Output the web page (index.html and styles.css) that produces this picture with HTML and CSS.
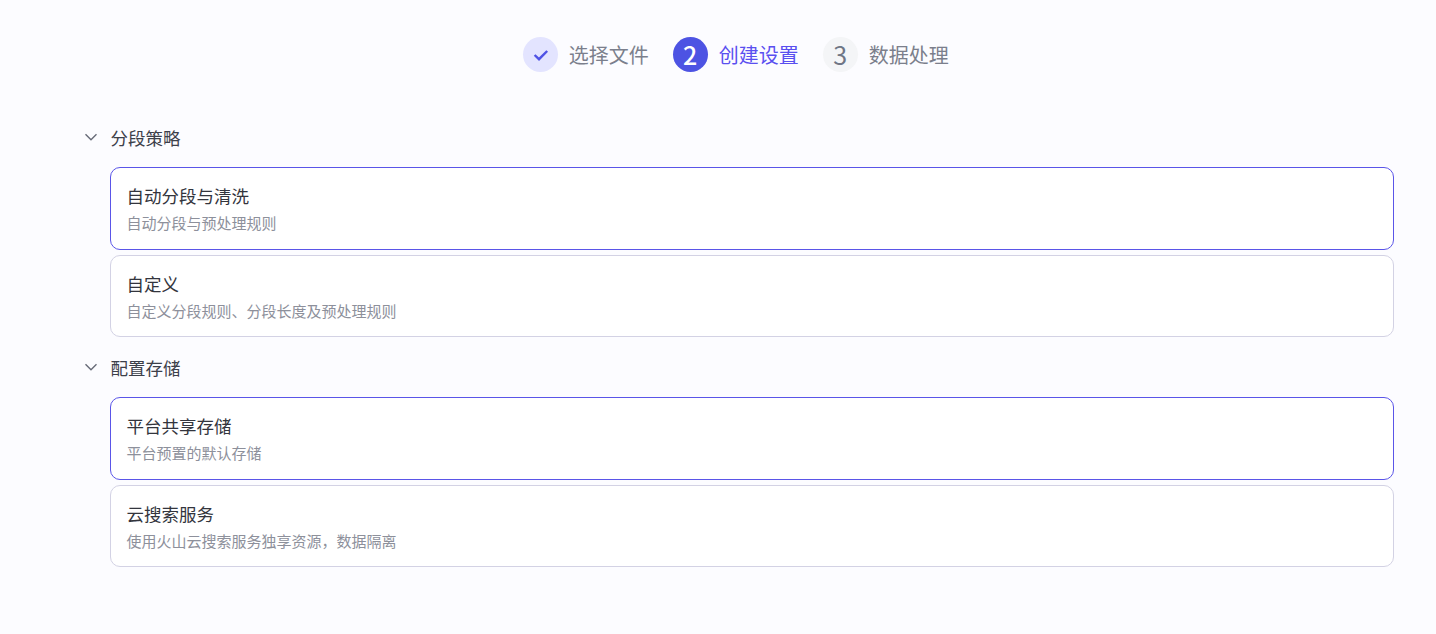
FILE: index.html
```html
<!DOCTYPE html>
<html lang="zh-CN">
<head>
  <meta charset="UTF-8" />
  <title>创建设置</title>
  <link rel="stylesheet" href="styles.css">
</head>
<body>
  <div class="steps">
    <div class="step done">
      <span class="step-icon">
        <svg width="16" height="16" viewBox="0 0 16 16" fill="none"><path d="M1.6 8 6 12.2 14.2 4" stroke="#4f52e5" stroke-width="2.4"/></svg>
      </span>
      <span class="step-label">选择文件</span>
    </div>
    <div class="step active">
      <span class="step-icon">2</span>
      <span class="step-label">创建设置</span>
    </div>
    <div class="step">
      <span class="step-icon">3</span>
      <span class="step-label">数据处理</span>
    </div>
  </div>

  <div class="settings">
    <div class="section">
      <div class="section-head">
        <svg class="chevron" width="14" height="14" viewBox="0 0 14 14" fill="none"><path d="M1.5 4.2 7 9.8 12.5 4.2" stroke="#676b78" stroke-width="1.4"/></svg>
        <span>分段策略</span>
      </div>
      <div class="option selected">
        <div class="option-title">自动分段与清洗</div>
        <div class="option-desc">自动分段与预处理规则</div>
      </div>
      <div class="option">
        <div class="option-title">自定义</div>
        <div class="option-desc">自定义分段规则、分段长度及预处理规则</div>
      </div>
    </div>

    <div class="section">
      <div class="section-head">
        <svg class="chevron" width="14" height="14" viewBox="0 0 14 14" fill="none"><path d="M1.5 4.2 7 9.8 12.5 4.2" stroke="#676b78" stroke-width="1.4"/></svg>
        <span>配置存储</span>
      </div>
      <div class="option selected">
        <div class="option-title">平台共享存储</div>
        <div class="option-desc">平台预置的默认存储</div>
      </div>
      <div class="option">
        <div class="option-title">云搜索服务</div>
        <div class="option-desc">使用火山云搜索服务独享资源，数据隔离</div>
      </div>
    </div>
  </div>
</body>
</html>
```

FILE: styles.css
```css
html, body {
  height: 100%;
}
body {
  margin: 0;
  background-color: #fcfcff;
  font-family: "Noto Sans CJK SC", "Noto Sans", sans-serif;
  overflow: hidden;
}
.steps {
  display: flex;
  justify-content: center;
  gap: 24px;
  padding: 37px 0 0 35.5px;
}
.step {
  display: flex;
  align-items: center;
  gap: 11px;
  height: 35px;
}
.step-icon {
  display: flex;
  align-items: center;
  justify-content: center;
  box-sizing: border-box;
  width: 35px;
  height: 35px;
  padding-bottom: 1px;
  border-radius: 50%;
  background: #f4f5f7;
  color: #6f7585;
  font-size: 25px;
}
.step-label {
  font-size: 20px;
  line-height: 35px;
  color: #7b7f8c;
}
.step.done .step-icon {
  padding: 0 0 0 1px;
  background: #e3e4ff;
}
.step.active .step-icon {
  background: #4d53e3;
  color: #fff;
  font-weight: 500;
}
.step.active .step-label {
  color: #5a4ff0;
}
.settings {
  padding: 0 42px 0 84px;
  margin-top: 45px;
}
.section {
  margin-bottom: 10px;
}
.section-head {
  display: flex;
  align-items: center;
  gap: 12.5px;
  height: 40px;
  font-size: 17.5px;
  color: #3d404a;
}
.chevron {
  flex: none;
}
.option {
  margin: 0 0 5px 26px;
  height: 82px;
  box-sizing: border-box;
  padding: 15px 15.5px;
  background: #fff;
  border: 1px solid #d3d2e4;
  border-radius: 10px;
}
.section-head + .option {
  margin-top: 10px;
}
.option.selected {
  height: 83px;
  border-color: #5a55e8;
}
.option-title {
  font-size: 17.5px;
  line-height: 26px;
  margin-bottom: 2px;
  color: #33353d;
}
.option-desc {
  font-size: 15px;
  line-height: 24px;
  color: #8d909b;
}
```
